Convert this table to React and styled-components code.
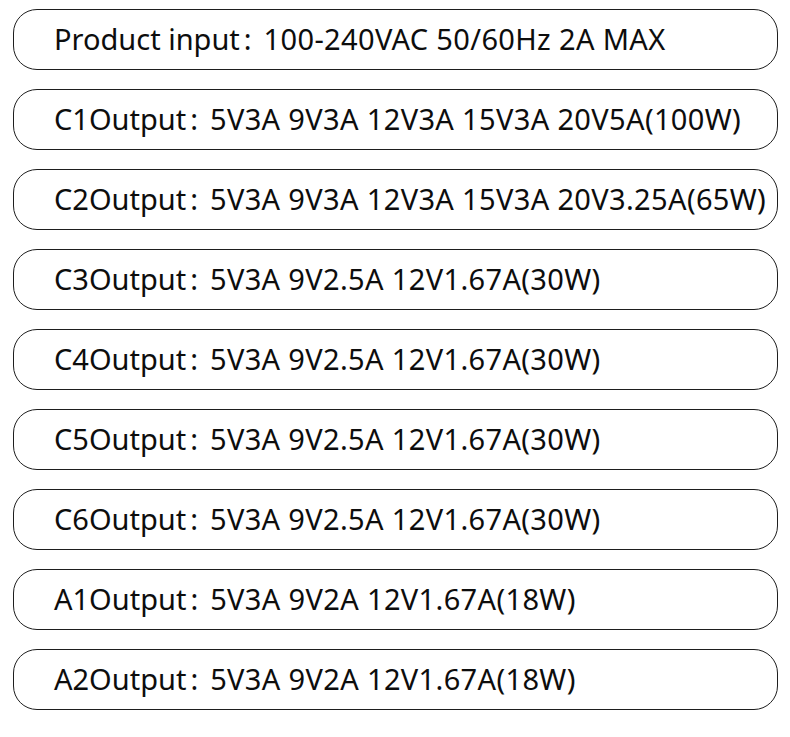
import React from "react";
import styled, { createGlobalStyle } from "styled-components";

const rows = [
  { label: "Product input", value: "100-240VAC 50/60Hz 2A MAX" },
  { label: "C1Output", value: "5V3A 9V3A 12V3A 15V3A 20V5A(100W)" },
  { label: "C2Output", value: "5V3A 9V3A 12V3A 15V3A 20V3.25A(65W)" },
  { label: "C3Output", value: "5V3A 9V2.5A 12V1.67A(30W)" },
  { label: "C4Output", value: "5V3A 9V2.5A 12V1.67A(30W)" },
  { label: "C5Output", value: "5V3A 9V2.5A 12V1.67A(30W)" },
  { label: "C6Output", value: "5V3A 9V2.5A 12V1.67A(30W)" },
  { label: "A1Output", value: "5V3A 9V2A 12V1.67A(18W)" },
  { label: "A2Output", value: "5V3A 9V2A 12V1.67A(18W)" },
];

const GlobalStyle = createGlobalStyle`
  body {
    margin: 0;
    background: #fff;
  }
`;

export default function App() {
  return (
    <>
      <GlobalStyle />
      <List>
        {rows.map((row) => (
          <Pill key={row.label}>
            {row.label}
            <Colon>:</Colon>
            <Value>{row.value}</Value>
          </Pill>
        ))}
      </List>
    </>
  );
}

const List = styled.div`
  display: flex;
  flex-direction: column;
  gap: 19px;
  padding: 9px 0 0 13px;
  width: 765px;
`;

const Pill = styled.div`
  box-sizing: border-box;
  height: 61px;
  border: 1.2px solid #1e1e1e;
  border-radius: 24px;
  display: flex;
  align-items: center;
  padding: 0 0 3px 40px;
  font-family: "Noto Sans", "Noto Sans CJK SC", sans-serif;
  font-size: 29px;
  line-height: 1;
  color: #0d0d0d;
  white-space: nowrap;
`;

const Colon = styled.span`
  margin: 0 12px 0 4px;
`;

const Value = styled.span`
  letter-spacing: 0.35px;
`;
